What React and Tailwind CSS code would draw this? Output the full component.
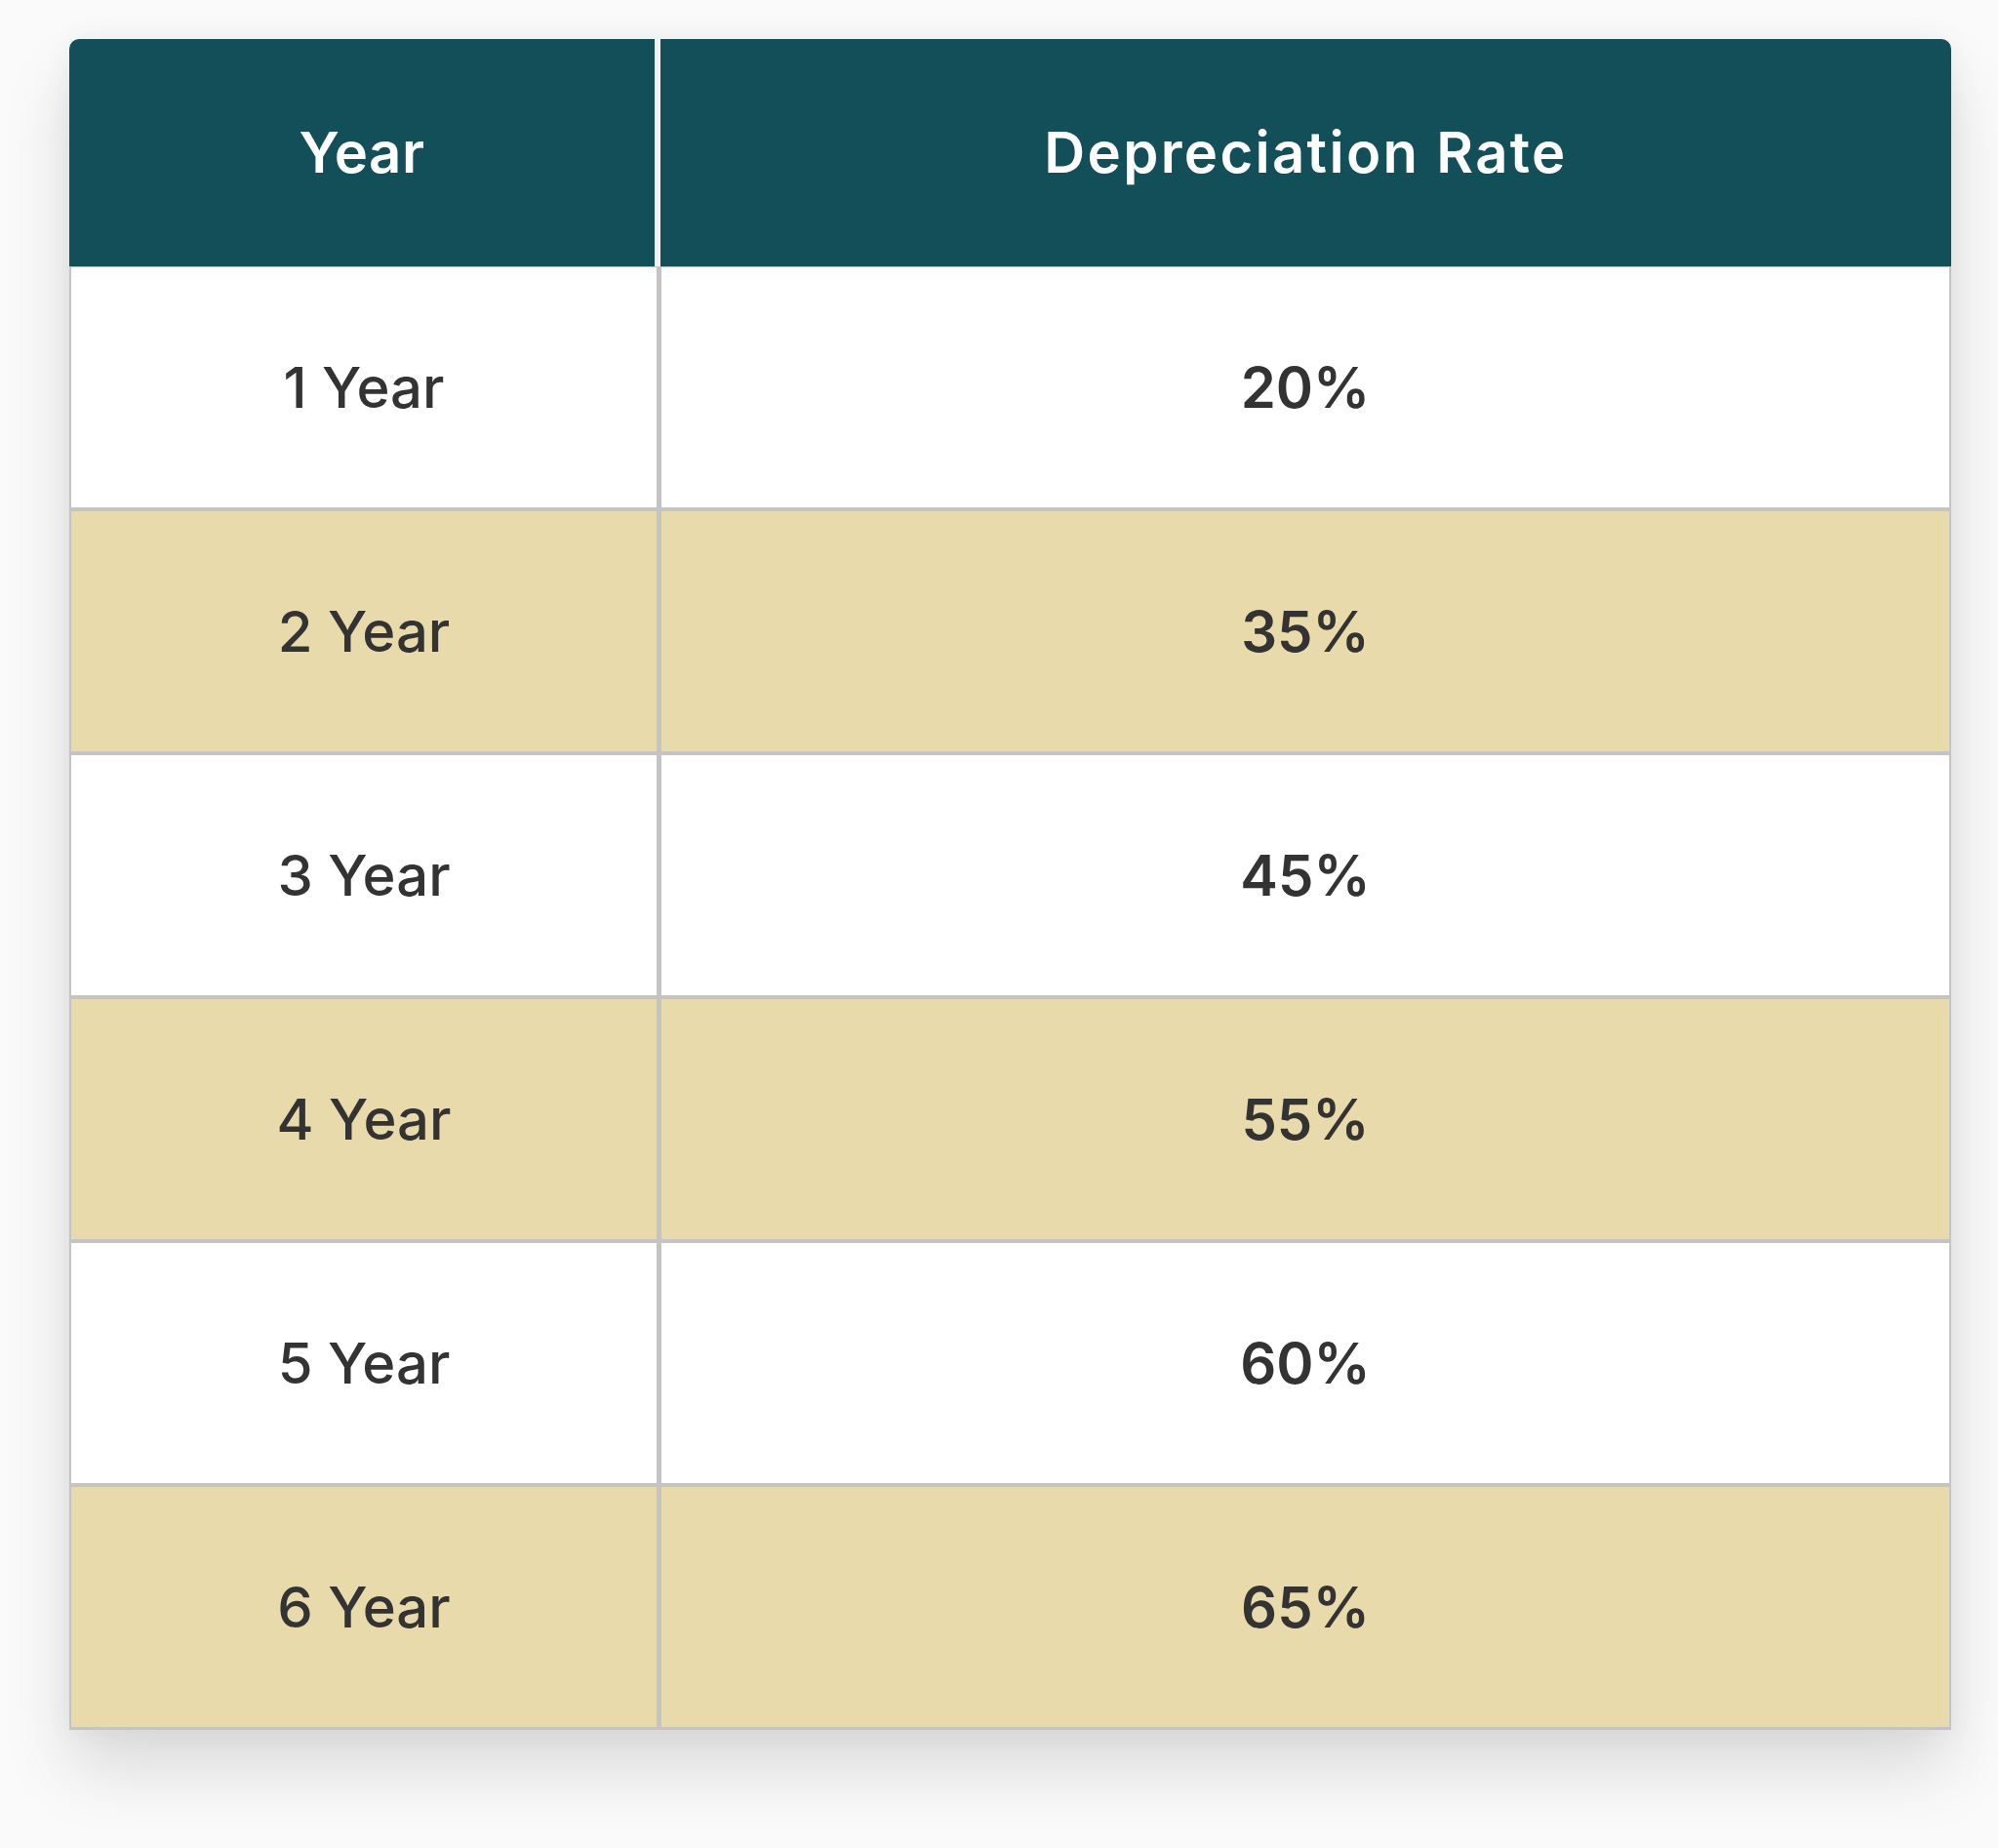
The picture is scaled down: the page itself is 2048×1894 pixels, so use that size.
import React from 'react';

const rows = [
  { year: '1 Year', rate: '20%' },
  { year: '2 Year', rate: '35%' },
  { year: '3 Year', rate: '45%' },
  { year: '4 Year', rate: '55%' },
  { year: '5 Year', rate: '60%' },
  { year: '6 Year', rate: '65%' },
];

const App = () => {
  return (
    <div className="min-h-screen bg-[#fafafa] pt-[40px] pl-[71px] pb-[122px] font-['Inter',sans-serif]">
      <div className="w-[1929px] rounded-t-[10px] overflow-hidden shadow-[0_40px_70px_rgba(0,0,0,0.13),0_0_30px_rgba(0,0,0,0.05)]">
        {/* header */}
        <div className="flex h-[233px] bg-[#134f59] text-white text-[58px] font-semibold">
          <div className="w-[600px] flex items-center justify-center tracking-[0.01em]">Year</div>
          <div className="w-[6px] bg-[#f2f2f2]" />
          <div className="flex-1 flex items-center justify-center tracking-[0.04em]">Depreciation Rate</div>
        </div>

        {/* body */}
        <div className="border-x-[2px] border-b-[3px] border-t-[1px] border-[#c4c4c4]">
          {rows.map((row, i) => {
            const last = i === rows.length - 1;
            return (
              <div
                key={row.year}
                className={`flex text-[#333333] text-[58px] ${i % 2 === 1 ? 'bg-[#e8daaa]' : 'bg-white'} ${last ? 'h-[246px]' : 'h-[250px] border-b-[4px] border-[#c4c4c4]'}`}
              >
                <div className="w-[605px] flex items-center justify-center border-r-[5px] border-[#c4c4c4] font-medium">{row.year}</div>
                <div className="flex-1 flex items-center justify-center font-semibold">{row.rate}</div>
              </div>
            );
          })}
        </div>
      </div>
    </div>
  );
};

export default App;
